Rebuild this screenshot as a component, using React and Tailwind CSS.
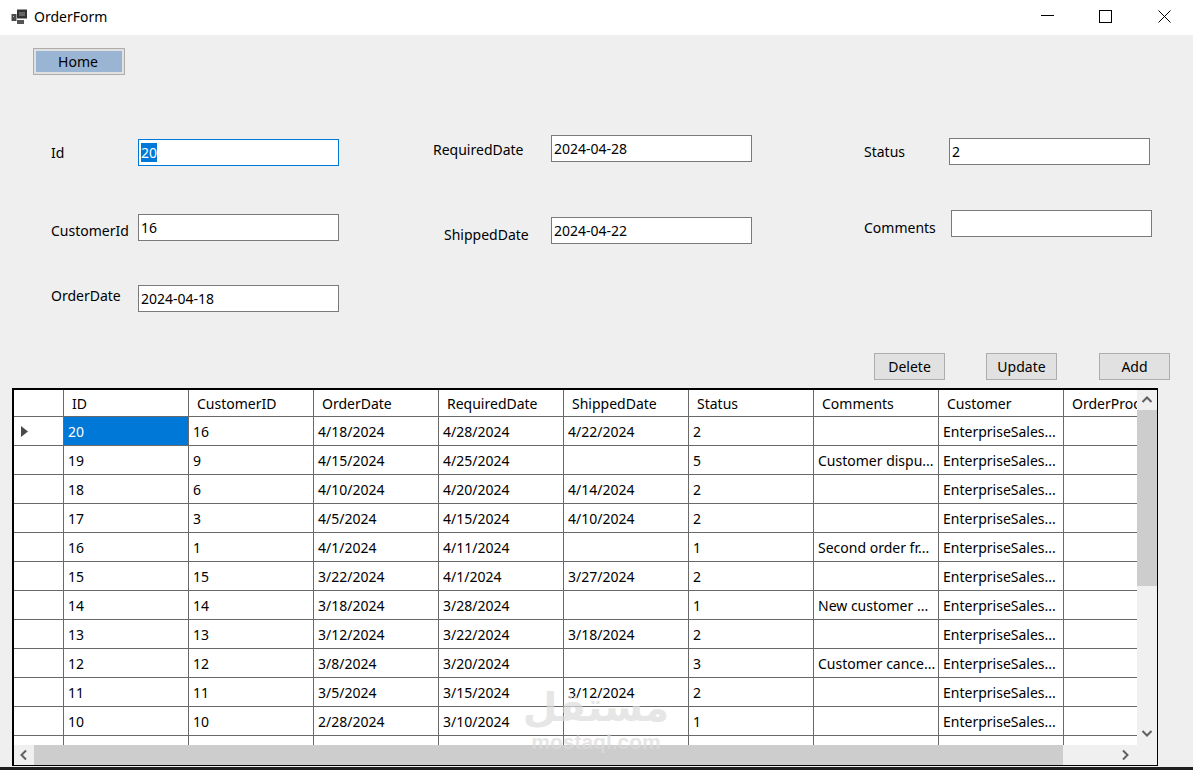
import React from "react";

const rows = [
  ["20","16","4/18/2024","4/28/2024","4/22/2024","2",""],
  ["19","9","4/15/2024","4/25/2024","","5","Customer dispu..."],
  ["18","6","4/10/2024","4/20/2024","4/14/2024","2",""],
  ["17","3","4/5/2024","4/15/2024","4/10/2024","2",""],
  ["16","1","4/1/2024","4/11/2024","","1","Second order fr..."],
  ["15","15","3/22/2024","4/1/2024","3/27/2024","2",""],
  ["14","14","3/18/2024","3/28/2024","","1","New customer ..."],
  ["13","13","3/12/2024","3/22/2024","3/18/2024","2",""],
  ["12","12","3/8/2024","3/20/2024","","3","Customer cance..."],
  ["11","11","3/5/2024","3/15/2024","3/12/2024","2",""],
  ["10","10","2/28/2024","3/10/2024","","1",""],
];
const headers = ["ID","CustomerID","OrderDate","RequiredDate","ShippedDate","Status","Comments","Customer","OrderProducts"];

function Field({ value, selected }) {
  return (
    <div className={`w-[201px] h-[27px] shrink-0 bg-white border pl-[2px] flex items-center ${selected ? "border-[#0078d7]" : "border-[#7a7a7a]"}`}>
      {selected ? <span className="bg-[#0078d7] text-white leading-[19px]">{value}</span> : <span>{value}</span>}
    </div>
  );
}

function Btn({ children, className = "" }) {
  return (
    <div className={`w-[71px] h-[27px] bg-[#e1e1e1] border border-[#adadad] flex items-center justify-center ${className}`}>{children}</div>
  );
}

function Chevron({ d }) {
  return (
    <svg width="12" height="12" viewBox="0 0 12 12" fill="none" stroke="#606060" strokeWidth="2">
      <path d={d} />
    </svg>
  );
}

function Cell({ children, selected, head }) {
  return (
    <div className={`w-[125px] shrink-0 border-r border-[#696969] flex items-center whitespace-nowrap overflow-hidden ${head ? "pl-[8px]" : "pl-[4px]"} ${selected ? "bg-[#0078d7] text-white" : ""}`}>
      {children}
    </div>
  );
}

export default function App() {
  return (
    <div className="relative w-[1193px] h-[770px] overflow-hidden flex flex-col bg-[#efefef] text-black text-[14px] font-['Noto_Sans','Open_Sans',sans-serif]">
      {/* title bar */}
      <div className="h-[35px] shrink-0 bg-white flex items-center pb-[2px]">
        <svg className="ml-[11px]" width="16" height="16" viewBox="0 0 16 16">
          <rect x="0.5" y="5" width="5" height="7" fill="#4a4a4a" />
          <rect x="6" y="0.5" width="10" height="9" fill="#333333" />
          <rect x="6" y="11" width="7" height="4" fill="#555555" />
          <rect x="2" y="7" width="1" height="1" fill="#bbbbbb" />
          <rect x="8" y="3" width="6" height="4" fill="#666666" />
        </svg>
        <span className="ml-[7px] text-[14px]">OrderForm</span>
        <div className="ml-auto flex items-center mr-[22px]">
          <svg width="13" height="13" viewBox="0 0 13 13" stroke="#000" fill="none" className="mr-[45px]"><path d="M0 5.5H13" /></svg>
          <svg width="13" height="13" viewBox="0 0 13 13" stroke="#000" fill="none" className="mr-[46px]"><rect x="0.5" y="0.5" width="12" height="12" /></svg>
          <svg width="13" height="13" viewBox="0 0 13 13" stroke="#000" fill="none"><path d="M0.5 0.5L12.5 12.5M12.5 0.5L0.5 12.5" /></svg>
        </div>
      </div>

      {/* home */}
      <div className="ml-[33px] mt-[13px] w-[92px] h-[27px] shrink-0 border border-[#adadad] bg-[#e1e1e1] p-[2px]">
        <div className="w-full h-full bg-[#9ab4d4] flex items-center justify-center pr-[2px]">Home</div>
      </div>

      {/* form */}
      <div className="mt-[60px] h-[177px] shrink-0 flex pl-[51px]">
        <div className="w-[288px] flex flex-col">
          <div className="mt-[4px] flex items-center">
            <span className="w-[87px]">Id</span><Field value="20" selected />
          </div>
          <div className="mt-[48px] flex items-center">
            <span className="w-[87px] mt-[6px]">CustomerId</span><Field value="16" />
          </div>
          <div className="mt-[44px] flex items-center">
            <span className="w-[87px] mb-[6px]">OrderDate</span><Field value="2024-04-18" />
          </div>
        </div>
        <div className="ml-[94px] w-[319px] flex flex-col">
          <div className="flex items-center">
            <span className="w-[118px] mt-[1px]">RequiredDate</span><Field value="2024-04-28" />
          </div>
          <div className="mt-[53px] flex items-center">
            <span className="w-[107px] ml-[11px] mt-[9px]">ShippedDate</span><Field value="2024-04-22" />
          </div>
        </div>
        <div className="ml-[112px] flex flex-col">
          <div className="mt-[3px] flex items-center">
            <span className="w-[85px]">Status</span><Field value="2" />
          </div>
          <div className="mt-[44px] flex items-center">
            <span className="w-[87px] mt-[8px]">Comments</span><Field value="" />
          </div>
        </div>
      </div>

      {/* actions */}
      <div className="mt-[41px] flex shrink-0 pl-[874px]">
        <Btn>Delete</Btn>
        <Btn className="ml-[41px]">Update</Btn>
        <Btn className="ml-[42px]">Add</Btn>
      </div>

      {/* grid */}
      <div className="mt-[8px] ml-[12px] w-[1146px] h-[378px] shrink-0 border-2 border-b border-r border-black bg-[#efefef] flex flex-col overflow-hidden">
        <div className="flex h-[355px] shrink-0">
          <div className="w-[1123px] overflow-hidden bg-white shrink-0">
            <div className="flex h-[27px] border-b border-[#696969] w-[1200px]">
              <div className="w-[50px] shrink-0 border-r border-[#696969]" />
              {headers.map((h) => <Cell key={h} head>{h}</Cell>)}
            </div>
            {rows.map((r, i) => (
              <div key={r[0]} className="flex h-[29px] border-b border-[#696969] w-[1200px]">
                <div className="w-[50px] shrink-0 border-r border-[#696969] flex items-center pl-[7px]">
                  {i === 0 && (
                    <svg width="7" height="11" viewBox="0 0 7 11"><path d="M0 0L7 5.5L0 11Z" fill="#4a4a4a" /></svg>
                  )}
                </div>
                {r.map((c, j) => <Cell key={j} selected={i === 0 && j === 0}>{c}</Cell>)}
                <Cell>EnterpriseSales...</Cell>
                <Cell />
              </div>
            ))}
            <div className="flex h-[29px] w-[1200px]">
              <div className="w-[50px] shrink-0 border-r border-[#696969]" />
              {headers.map((h) => <Cell key={h} />)}
            </div>
          </div>
          {/* vertical scrollbar */}
          <div className="w-[20px] shrink-0 flex flex-col bg-[#f0f0f0]">
            <div className="h-[20px] flex items-center justify-center"><Chevron d="M1.5 8L6 3.5L10.5 8" /></div>
            <div className="h-[176px] bg-[#cdcdcd]" />
            <div className="flex-1" />
            <div className="h-[20px] flex items-center justify-center pb-[4px]"><Chevron d="M1.5 4L6 8.5L10.5 4" /></div>
          </div>
        </div>
        {/* horizontal scrollbar */}
        <div className="flex h-[20px] shrink-0 bg-[#f0f0f0]">
          <div className="w-[20px] flex items-center justify-center"><Chevron d="M8 1.5L3.5 6L8 10.5" /></div>
          <div className="w-[1029px] bg-[#cdcdcd]" />
          <div className="w-[54px]" />
          <div className="w-[20px] flex items-center justify-center pr-[4px]"><Chevron d="M4 1.5L8.5 6L4 10.5" /></div>
        </div>
      </div>

      <div className="mt-[1px] flex-1 bg-[#1e1e1e]" />

      {/* watermark */}
      <div className="absolute left-[511px] top-[684px] w-[170px] flex flex-col items-center pointer-events-none text-[#dcdcdc] opacity-70">
        <span dir="rtl" className="text-[40px] leading-[46px] font-bold font-['DejaVu_Sans',sans-serif]">مستقل</span>
        <span className="text-[21px] leading-[24px] font-bold font-['Liberation_Sans',sans-serif]">mostaql.com</span>
      </div>
    </div>
  );
}
